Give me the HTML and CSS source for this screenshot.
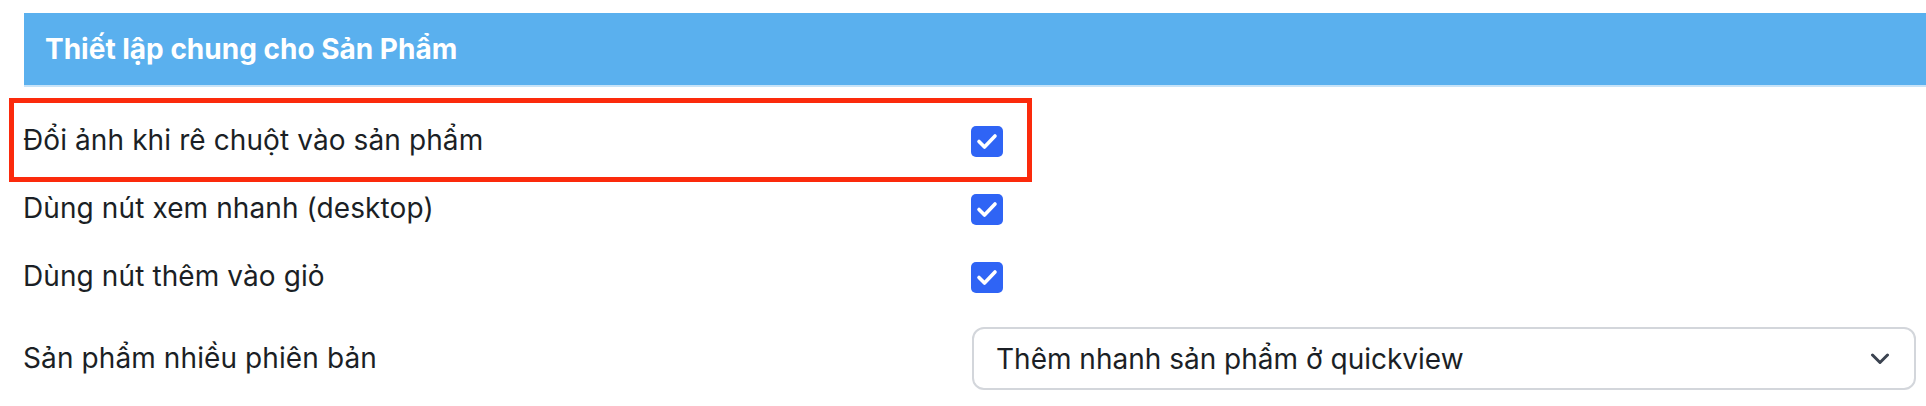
FILE: index.html
```html
<!DOCTYPE html>
<html lang="vi">
<head>
<meta charset="utf-8">
<title>Thiết lập chung cho Sản Phẩm</title>
<link rel="stylesheet" href="styles.css">
</head>
<body>
<div class="page">
  <div class="panel-head">
    <h2 class="panel-title">Thiết lập chung cho Sản Phẩm</h2>
  </div>
  <div class="rows">
    <div class="row row-check is-highlighted">
      <label class="row-label">Đổi ảnh khi rê chuột vào sản phẩm</label>
      <span class="checkbox"><svg viewBox="0 0 32 32" width="32" height="32"><path d="M8 16.5 L13.5 22 L24 11" fill="none" stroke="#fff" stroke-width="3.6" stroke-linecap="round" stroke-linejoin="round"/></svg></span>
      <span class="highlight"></span>
    </div>
    <div class="row row-check">
      <label class="row-label">Dùng nút xem nhanh (desktop)</label>
      <span class="checkbox"><svg viewBox="0 0 32 32" width="32" height="32"><path d="M8 16.5 L13.5 22 L24 11" fill="none" stroke="#fff" stroke-width="3.6" stroke-linecap="round" stroke-linejoin="round"/></svg></span>
    </div>
    <div class="row row-check">
      <label class="row-label">Dùng nút thêm vào giỏ</label>
      <span class="checkbox"><svg viewBox="0 0 32 32" width="32" height="32"><path d="M8 16.5 L13.5 22 L24 11" fill="none" stroke="#fff" stroke-width="3.6" stroke-linecap="round" stroke-linejoin="round"/></svg></span>
    </div>
    <div class="row row-select">
      <label class="row-label">Sản phẩm nhiều phiên bản</label>
      <div class="select">
        <span class="select-value">Thêm nhanh sản phẩm ở quickview</span>
        <svg class="chevron" viewBox="0 0 20 12" width="20" height="12"><path d="M2.5 2 L10 9.5 L17.5 2" fill="none" stroke="#3b4350" stroke-width="3" stroke-linecap="round" stroke-linejoin="round"/></svg>
      </div>
    </div>
  </div>
</div>
</body>
</html>
```

FILE: styles.css
```css
* { box-sizing: border-box; }
html, body { margin: 0; padding: 0; background: #fff; }
body {
  font-family: Inter, "Noto Sans", "Liberation Sans", sans-serif;
  color: #1b1f25;
  overflow: hidden;
}
.page {
  padding: 13px 10px 0 24px;
}
.panel-head {
  margin-right: -10px;
  height: 74px;
  background: #5ab0ee;
  border-bottom: 2px solid #c7e3f8;
  display: flex;
  align-items: center;
  padding: 0 21px;
}
.panel-title {
  margin: 0;
  font-size: 28px;
  font-weight: 700;
  color: #fff;
  letter-spacing: 0;
}
.rows {
  padding-top: 20px;
  display: flex;
  flex-direction: column;
}
.row {
  position: relative;
  display: grid;
  grid-template-columns: 947px 1fr;
  align-items: center;
}
.row-check { height: 68px; }
.row-select { margin-top: 16px; height: 63px; }
.row-label {
  font-size: 28px;
  line-height: 1.2;
  letter-spacing: 0.1px;
  margin-left: -1px;
}
.checkbox {
  width: 32px;
  height: 31px;
  border-radius: 5px;
  background: #2f64f5;
  display: flex;
  align-items: center;
  justify-content: center;
}
.checkbox svg { display: block; }
.highlight {
  position: absolute;
  left: -15px;
  top: -9px;
  width: 1023px;
  height: 84px;
  border: 5px solid #fb2a0c;
  pointer-events: none;
}
.select {
  height: 63px;
  border: 2px solid #d3d6db;
  border-radius: 12px;
  display: flex;
  align-items: center;
  justify-content: space-between;
  padding: 0 24px 0 22px;
  margin-left: 1px;
}
.select-value {
  font-size: 28px;
}
.chevron { display: block; }
```
